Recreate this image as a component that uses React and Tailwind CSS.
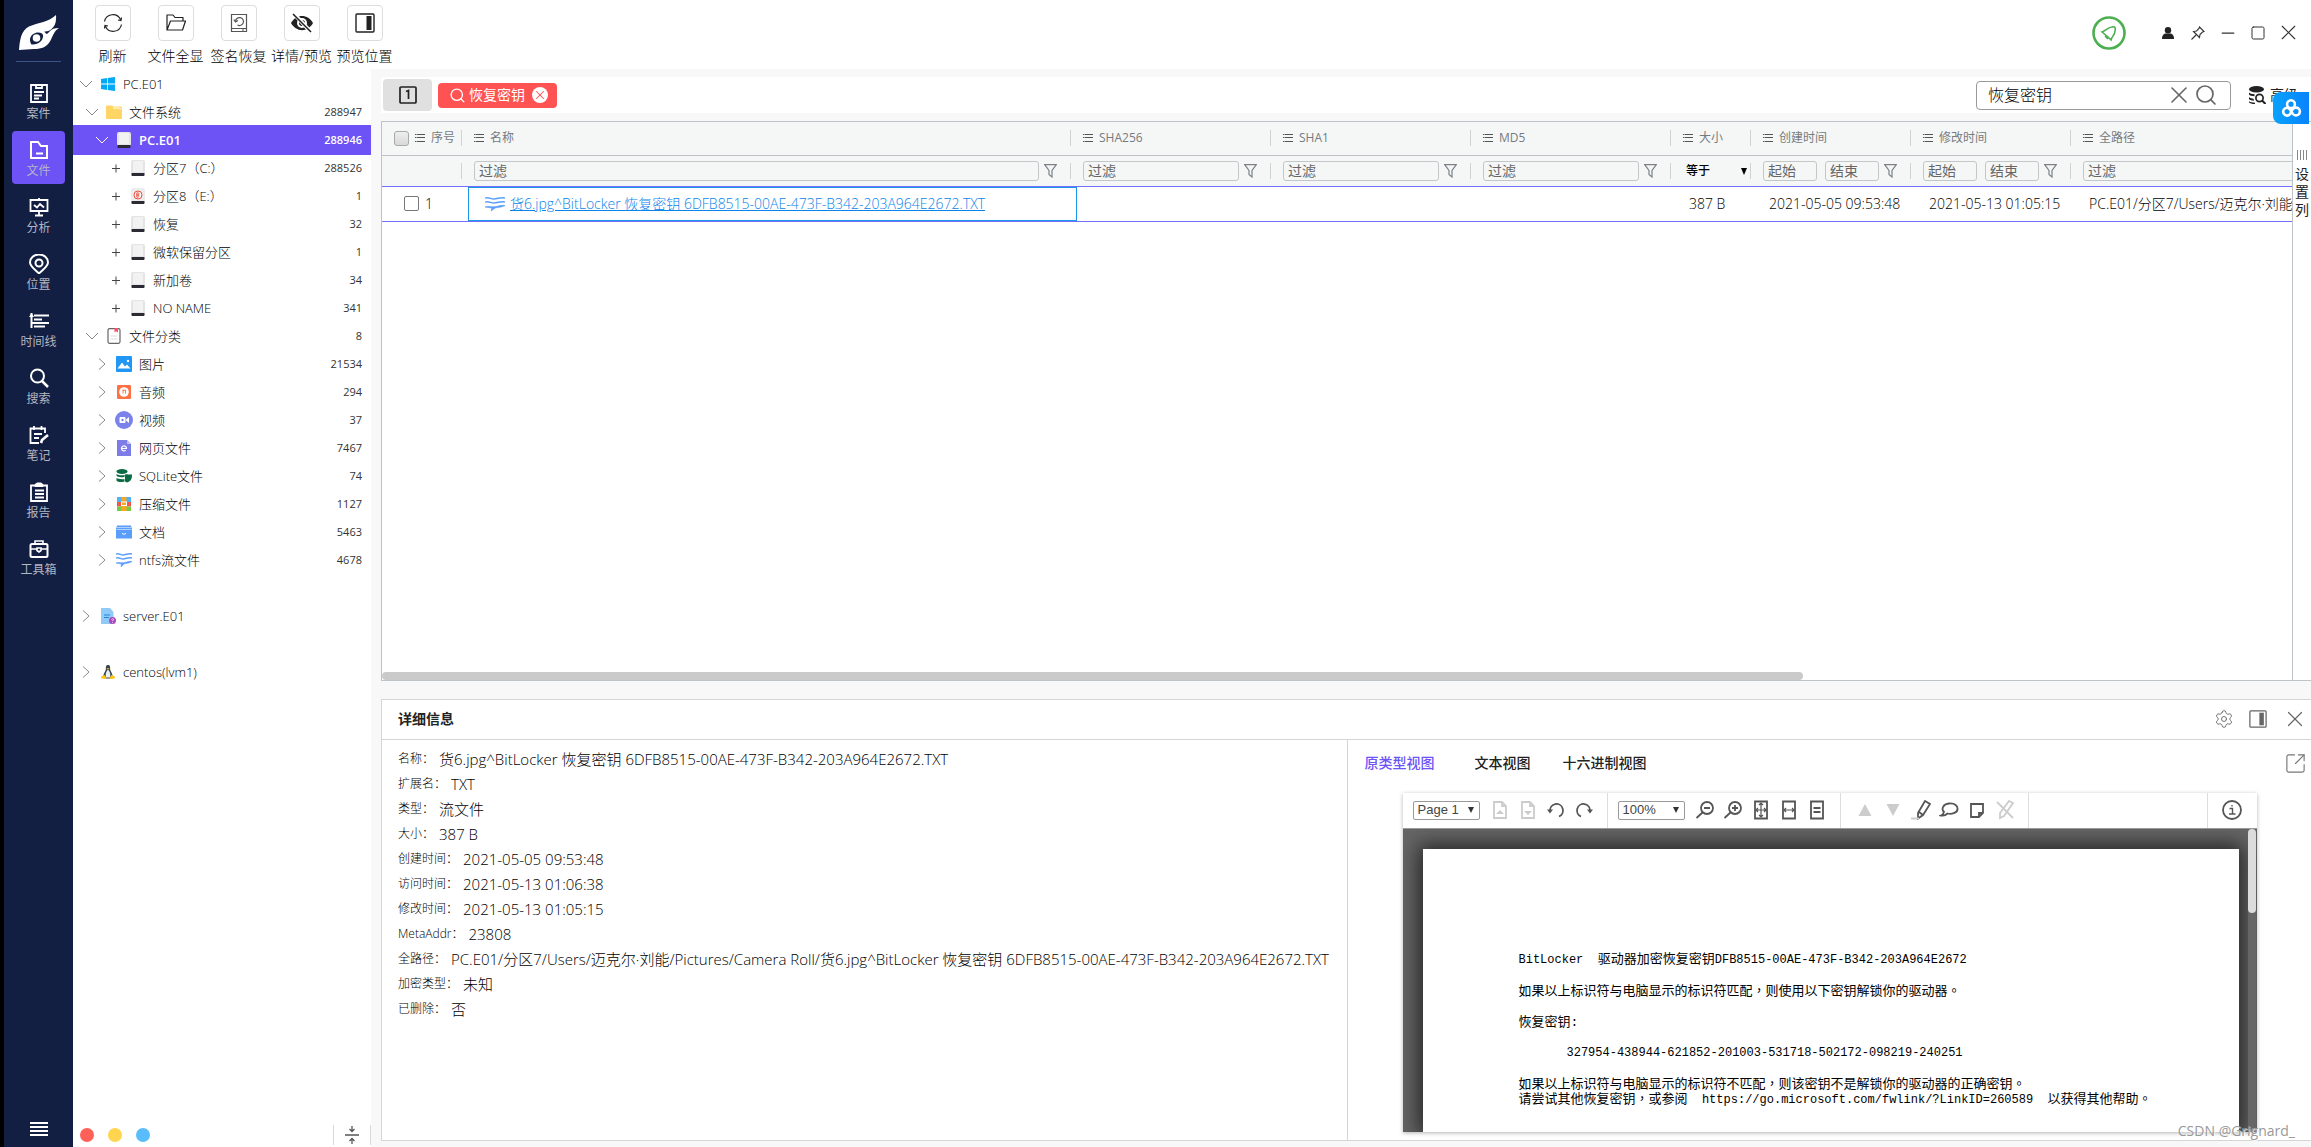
import { useState } from "react";
import { Search, X, Minus, Square, Settings, SquareArrowOutUpRight } from "lucide-react";

const NAV_ITEMS = [
  { label: "案件", icon: CaseIcon },
  { label: "文件", icon: FolderIcon },
  { label: "分析", icon: BoardIcon },
  { label: "位置", icon: PinIcon },
  { label: "时间线", icon: TimelineIcon },
  { label: "搜索", icon: NavSearchIcon },
  { label: "笔记", icon: NoteIcon },
  { label: "报告", icon: ReportIcon },
  { label: "工具箱", icon: ToolboxIcon },
];

const TOOLBAR = [
  { label: "刷新", icon: RefreshIcon },
  { label: "文件全显", icon: OpenFolderIcon },
  { label: "签名恢复", icon: RestoreIcon },
  { label: "详情/预览", icon: EyeOffIcon },
  { label: "预览位置", icon: PanelIcon },
];

const TREE = [
  { id: "pc", level: 0, open: true, icon: WindowsIcon, name: "PC.E01" },
  { id: "fs", level: 1, open: true, icon: YellowFolderIcon, name: "文件系统", count: 288947 },
  { id: "disk", level: 2, open: true, icon: DiskIcon, name: "PC.E01", count: 288946 },
  { id: "p7", level: 3, icon: DiskIcon, name: "分区7（C:）", count: 288526 },
  { id: "p8", level: 3, icon: LockedDiskIcon, name: "分区8（E:）", count: 1 },
  { id: "rec", level: 3, icon: DiskIcon, name: "恢复", count: 32 },
  { id: "msr", level: 3, icon: DiskIcon, name: "微软保留分区", count: 1 },
  { id: "vol", level: 3, icon: DiskIcon, name: "新加卷", count: 34 },
  { id: "noname", level: 3, icon: DiskIcon, name: "NO NAME", count: 341 },
  { id: "cat", level: 1, open: true, icon: BookIcon, name: "文件分类", count: 8 },
  { id: "img", level: 2, icon: ImageIcon, name: "图片", count: 21534 },
  { id: "audio", level: 2, icon: AudioIcon, name: "音频", count: 294 },
  { id: "video", level: 2, icon: VideoIcon, name: "视频", count: 37 },
  { id: "web", level: 2, icon: WebIcon, name: "网页文件", count: 7467 },
  { id: "sqlite", level: 2, icon: SqliteIcon, name: "SQLite文件", count: 74 },
  { id: "zip", level: 2, icon: ZipIcon, name: "压缩文件", count: 1127 },
  { id: "doc", level: 2, icon: DocsIcon, name: "文档", count: 5463 },
  { id: "ntfs", level: 2, icon: StreamIcon, name: "ntfs流文件", count: 4678 },
];

const OTHER_IMAGES = [
  { id: "server", level: 0, icon: UnknownFileIcon, name: "server.E01" },
  { id: "centos", level: 0, icon: LinuxIcon, name: "centos(lvm1)" },
];

const LEVEL_PADDING = {
  0: "pl-[7px]",
  1: "pl-[13px]",
  2: "pl-[23px]",
  3: "pl-[36px]",
};

const FILE_NAME =
  "货6.jpg^BitLocker 恢复密钥 6DFB8515-00AE-473F-B342-203A964E2672.TXT";

const DETAILS = [
  ["名称", FILE_NAME],
  ["扩展名", "TXT"],
  ["类型", "流文件"],
  ["大小", "387 B"],
  ["创建时间", "2021-05-05 09:53:48"],
  ["访问时间", "2021-05-13 01:06:38"],
  ["修改时间", "2021-05-13 01:05:15"],
  ["MetaAddr", "23808"],
  ["全路径", `PC.E01/分区7/Users/迈克尔·刘能/Pictures/Camera Roll/${FILE_NAME}`],
  ["加密类型", "未知"],
  ["已删除", "否"],
];

const COLUMNS = [
  { name: "名称", width: "w-[609px]", filter: "text" },
  { name: "SHA256", width: "w-[200px]", filter: "text" },
  { name: "SHA1", width: "w-[200px]", filter: "text" },
  { name: "MD5", width: "w-[200px]", filter: "text" },
  { name: "大小", width: "w-[80px]", filter: "size" },
  { name: "创建时间", width: "w-[160px]", filter: "range" },
  { name: "修改时间", width: "w-[160px]", filter: "range" },
  { name: "全路径", width: "", filter: "path" },
];

const PREVIEW_TABS = ["原类型视图", "文本视图", "十六进制视图"];

/* ---------- nav icons ---------- */

function NavSvg({ children }) {
  return (
    <svg className="size-5" viewBox="0 0 20 20" fill="none" stroke="currentColor" strokeWidth="2">
      {children}
    </svg>
  );
}

function CaseIcon() {
  return (
    <NavSvg>
      <path d="M2 2h16v17H2zM7 1v4h6V1M5 9h10M5 12.500h8M5 15.500h5" strokeWidth="1.800" />
    </NavSvg>
  );
}

function FolderIcon() {
  return (
    <NavSvg>
      <path d="M2 18V2h7l3 4h6v12zM7 13.500h7" />
    </NavSvg>
  );
}

function BoardIcon() {
  return (
    <NavSvg>
      <path d="M1.500 3h17v11h-17zM10 1v2M10 14v4M6 18.500h8M5 8l3 2.500 3-3.500 4 3.500" strokeWidth="1.800" />
    </NavSvg>
  );
}

function PinIcon() {
  return (
    <NavSvg>
      <path d="M10 19.500C5 15 1 12 1 8.500a9 8 0 0 1 18 0C19 12 15 15 10 19.500z" />
      <circle cx="10" cy="9" r="3.500" />
    </NavSvg>
  );
}

function TimelineIcon() {
  return (
    <NavSvg>
      <path d="M2.500 2v15M5 4.500h15M5 8.500h8M2 12h18M5 15.500h11" />
      <path d="M0 6l2.500-4L5 6z" fill="currentColor" stroke="none" />
    </NavSvg>
  );
}

function NavSearchIcon() {
  return (
    <NavSvg>
      <circle cx="8.500" cy="8" r="6.500" />
      <path d="M13 13l6 6" strokeWidth="2.500" />
    </NavSvg>
  );
}

function NoteIcon() {
  return (
    <NavSvg>
      <path d="M16 8V3.500H1.500V18H10M5 1v4M12.500 1v4M5 9h8M5 13h5" strokeWidth="1.800" />
      <path d="M12 18l1-3 6-5" strokeWidth="2.600" />
    </NavSvg>
  );
}

function ReportIcon() {
  return (
    <NavSvg>
      <path d="M2 3.500h16V19H2zM6 8.500h9M6 12h9M6 15.500h9" strokeWidth="1.800" />
      <path d="M6 2.500l2-1.500h4l2 1.500v2H6z" fill="currentColor" strokeWidth="1" />
    </NavSvg>
  );
}

function ToolboxIcon() {
  return (
    <NavSvg>
      <rect x="1.500" y="5" width="17" height="13" rx="1.500" />
      <path d="M6 5V2h8v3M2 10h5.500M12.500 10H18M8 9h4v2.500l-2 1.500-2-1.500z" strokeWidth="1.600" />
    </NavSvg>
  );
}

function Logo() {
  return (
    <svg className="h-9 w-10" viewBox="0 0 40 36">
      <path
        d="M0 35C1 24 2 16 10 11.500 19 7.500 30 7 37 0c.5 6-.5 11-5 14.500-3 2.500-8 2-13 3-6 1.500-8 7-6.500 12.500.5 1.500 0 2-1 1.500C8 26 10 18 17 15.500c4-1.200 8 0 9.500 2.500 1 1.500 2 1 4-1.500 2-2.500 5-3.500 9.500-3.500-5 3-6 8-8.500 12.500C28 32 23 34 15 34z"
        fill="#fff"
      />
      <path d="M11 24c1-6 8-8 12-5.500 2 2 1 6-2 8.500-2 1.500-5 3-8.500 2.500-1-1-1.500-3-1.500-5.500z" fill="#121f42" />
      <circle cx="17.500" cy="23" r="3.800" fill="#fff" />
    </svg>
  );
}

/* ---------- toolbar icons ---------- */

function RefreshIcon() {
  return (
    <svg className="size-5" viewBox="0 0 20 20" fill="none" stroke="#222" strokeWidth="1.200">
      <path d="M1.500 8.500A8.500 8.500 0 0 1 17.500 6.500M18.500 11.500A8.500 8.500 0 0 1 2.500 13.500M18.500 4.500l-.5 3-3-.5M1.500 15.500l.5-3 3 .5" />
    </svg>
  );
}

function OpenFolderIcon() {
  return (
    <svg className="size-5" viewBox="0 0 20 20" fill="none" stroke="#222" strokeWidth="1.200" strokeLinejoin="round">
      <path d="M1 17V2h6l2 2.500h8V8M1 17L4.500 8H19.500L16.500 17z" />
    </svg>
  );
}

function RestoreIcon() {
  return (
    <svg className="size-5" viewBox="0 0 20 20" fill="none" stroke="#555" strokeWidth="1.200">
      <path d="M2.500 1.500h15v17h-15zM2.500 15.500h15M13 17h2" />
      <path d="M6.500 8.500a4 4 0 1 1 2 3.500M4.800 6.500l1.700 2.500 2.500-1.500" />
    </svg>
  );
}

function EyeOffIcon() {
  return (
    <svg className="h-5 w-[22px]" viewBox="0 0 22 20" fill="none">
      <path d="M0 10c5-9.500 17-9.500 22 0-5 9.500-17 9.500-22 0z" fill="#222" />
      <circle cx="11" cy="10" r="5" fill="#fff" />
      <circle cx="11" cy="10" r="3" fill="#222" />
      <path d="M3 1l17 18" stroke="#fff" strokeWidth="4" />
      <path d="M2 1l18 18" stroke="#222" strokeWidth="1.600" />
    </svg>
  );
}

function PanelIcon({ className = "size-5" }) {
  return (
    <svg className={className} viewBox="0 0 20 20" fill="none" stroke="currentColor" strokeWidth="1.400">
      <rect x="1" y="1" width="18" height="18" rx="1" />
      <path d="M11.500 3h5v14h-5z" fill="currentColor" stroke="none" />
    </svg>
  );
}

/* ---------- tree icons ---------- */

function WindowsIcon() {
  return (
    <svg className="size-[14px]" viewBox="0 0 14 14" fill="#03a9f4">
      <path d="M0 2l6-1v5.600H0zM6.700.9L14 0v6.600H6.700zM0 7.400h6V13l-6-1zM6.700 7.400H14V14l-7.300-1z" />
    </svg>
  );
}

function YellowFolderIcon() {
  return (
    <svg className="size-4" viewBox="0 0 16 16">
      <path d="M0 2.500C0 2 .5 1.500 1 1.500h5l1 1h8c.5 0 1 .5 1 1V14c0 .5-.5 1-1 1H1c-.5 0-1-.5-1-1z" fill="#ffd666" />
      <path d="M7 4h6l2 1" stroke="#fff" strokeWidth="1" fill="none" />
    </svg>
  );
}

function DiskIcon() {
  return (
    <svg className="h-4 w-[14px]" viewBox="0 0 14 16">
      <rect x="0" y="0" width="14" height="14" rx="2" fill="#e4e4e4" />
      <rect x="2" y="1" width="10" height="11" rx="1" fill="#f2f2f2" />
      <path d="M.5 13h13v2c0 .6-.4 1-1 1h-11c-.6 0-1-.4-1-1z" fill="#2b2b33" />
    </svg>
  );
}

function LockedDiskIcon() {
  return (
    <svg className="h-4 w-[14px]" viewBox="0 0 14 16">
      <rect x="0" y="0" width="14" height="14" rx="2" fill="#ececec" />
      <path d="M.5 13h13v2c0 .6-.4 1-1 1h-11c-.6 0-1-.4-1-1z" fill="#2b2b33" />
      <circle cx="7" cy="7" r="4" fill="#fff" stroke="#e74c3c" />
      <path d="M5.800 4.800v4.400h1.400a1.200 1.200 0 0 0 0-2.200H5.800h1.200a1.100 1.100 0 0 0 0-2.200z" fill="none" stroke="#e74c3c" strokeWidth=".9" />
    </svg>
  );
}

function BookIcon() {
  return (
    <svg className="size-4" viewBox="0 0 16 16">
      <rect x="2" y=".7" width="12" height="14.600" rx="1.500" fill="#fff" stroke="#666" strokeWidth="1.200" />
      <path d="M8.500 0h3.500v4.500l-1.800-1.300-1.700 1.300z" fill="#ff4d6a" />
      <path d="M4.500 8h7M4.500 11h7" stroke="#ddd" />
    </svg>
  );
}

function ImageIcon() {
  return (
    <svg className="size-4" viewBox="0 0 16 16">
      <rect width="16" height="16" rx="1" fill="#2196f3" />
      <path d="M1.500 12.500l4.500-6 3 4 2-2 3.500 4z" fill="#fff" />
      <circle cx="12" cy="5" r="1.200" fill="#fff" />
    </svg>
  );
}

function AudioIcon() {
  return (
    <svg className="size-4" viewBox="0 0 16 16">
      <rect x="1" y="1" width="14" height="14" rx="1" fill="#ff7043" />
      <circle cx="8" cy="8" r="4.800" fill="#fff" />
      <path d="M7 5.500v4M7 6.500l2.500-.5v3.500" stroke="#ff7043" fill="none" />
    </svg>
  );
}

function VideoIcon() {
  return (
    <svg className="size-[18px]" viewBox="0 0 18 18">
      <circle cx="9" cy="9" r="9" fill="#7b83eb" />
      <rect x="4.500" y="6" width="6" height="6" rx="1" fill="#fff" />
      <path d="M10.500 9l3.500-3v6z" fill="#fff" />
      <circle cx="7.500" cy="9" r="1.200" fill="#7b83eb" />
    </svg>
  );
}

function WebIcon() {
  return (
    <svg className="size-4" viewBox="0 0 16 16">
      <path d="M1 0h10l4 4v12H1z" fill="#7e7ce6" />
      <path d="M11 0l4 4h-4z" fill="#c3c2f7" />
      <path d="M5.500 8.500h5a2.500 2.500 0 1 0-.8 1.800" stroke="#fff" strokeWidth="1.200" fill="none" />
    </svg>
  );
}

function SqliteIcon() {
  return (
    <svg className="size-4" viewBox="0 0 16 16" fill="#0b6b45">
      <ellipse cx="6" cy="3.500" rx="5.500" ry="2.500" />
      <path d="M.5 6c2 1.700 9 1.700 11 0v1.500H8.500v1.500C4 9.500 1 9 .5 7.500zM.5 10c1.500 1 5 1.500 8 1v2.500C5 14.500 1 14 .5 12.500z" />
      <path d="M9 6.500h7c0 5-1.500 7-5 8l-2-1z" />
    </svg>
  );
}

function ZipIcon() {
  return (
    <svg className="size-4" viewBox="0 0 16 16">
      <path d="M1 1h14v5H1z" fill="#4fb3f6" />
      <path d="M1 6h14v4.500H1z" fill="#f2564d" />
      <path d="M1 10.500h14V15H1z" fill="#7ac943" />
      <path d="M5.500 1h5v14h-5z" fill="#f6a623" />
      <rect x="5.500" y="6" width="5" height="3.500" fill="#f6a623" stroke="#fff" />
    </svg>
  );
}

function DocsIcon() {
  return (
    <svg className="size-4" viewBox="0 0 16 16">
      <path d="M1 1.500h14l1 3v10H0v-10z" fill="#5b9dfb" />
      <path d="M.5 3.500h15M.5 5.500h15" stroke="#d5e6ff" strokeWidth=".7" />
      <path d="M6 9.500q2 1.500 4 0" stroke="#fff" fill="none" />
    </svg>
  );
}

function StreamIcon({ className = "size-4" }) {
  return (
    <svg className={className} viewBox="0 0 16 16" preserveAspectRatio="none" fill="none" stroke="#5b9dfb" strokeWidth="1.500">
      <path d="M0 2.200c3-1.500 5 1.500 8 .7s5-1.700 8-1M0 6.200c3-1.500 5 1.500 8 .7s5-1.700 8-1" />
      <path d="M0 11c3-1.500 5 .3 8-.3s5-1.700 8-1.200c-3 2-6 1.800-8 2.500L5 15l.5-3z" fill="#5b9dfb" strokeWidth=".6" />
    </svg>
  );
}

function UnknownFileIcon() {
  return (
    <svg className="size-4" viewBox="0 0 16 16">
      <path d="M1 0h9l3.500 4v12H1z" fill="#90caf9" />
      <path d="M4 7h6M4 9.500h5" stroke="#2086e0" strokeWidth="1.200" />
      <circle cx="12.500" cy="12.500" r="3.500" fill="#ab47bc" />
      <path d="M11.500 11.500c.3-1 2-.9 2 0 0 .7-1 .8-1 1.600M12.500 14v.8" stroke="#fff" strokeWidth=".8" fill="none" />
    </svg>
  );
}

function LinuxIcon() {
  return (
    <svg className="size-[14px]" viewBox="0 0 14 14">
      <path d="M7 0C4.800 0 4.800 2 4.900 4 4.900 6 2 8.500 2.500 12l2.500 1.500h4l2.500-1.500C12 8.500 9.100 6 9.100 4 9.200 2 9.200 0 7 0z" fill="#37474f" />
      <path d="M7 4.500C5.500 6 4 9 5 12.500h4C10 9 8.500 6 7 4.500z" fill="#eceff1" />
      <path d="M5.500 3.200h3L7 4.800zM.3 11.500L3.500 10l2 3-1.500 1-4-.7zM13.700 11.500L10.500 10l-2 3 1.500 1 4-.7z" fill="#ffc107" />
    </svg>
  );
}

/* ---------- small shared glyphs ---------- */

function Chevron({ open }) {
  return open ? (
    <svg className="h-3 w-3 shrink-0" viewBox="0 0 12 12" fill="none" stroke="currentColor" strokeWidth="1">
      <path d="M0 3l6 6 6-6" />
    </svg>
  ) : (
    <svg className="h-3 w-3 shrink-0" viewBox="0 0 12 12" fill="none" stroke="currentColor" strokeWidth="1">
      <path d="M3 0.500l6 5.500-6 5.500" />
    </svg>
  );
}

function PlusMark() {
  return (
    <svg className="mr-px h-3 w-3 shrink-0" viewBox="0 0 12 12" stroke="#444" strokeWidth="1">
      <path d="M3 6.500h8M7 2.500v8" />
    </svg>
  );
}

function ListMark() {
  return (
    <svg className="h-[10px] w-[10px] shrink-0" viewBox="0 0 10 10" stroke="#555" strokeWidth="1">
      <path d="M0 1.500h1.500M2 1.500h8M0 4.500h1.500M2 4.500h8M0 8.500h1.500M2 8.500h8" />
    </svg>
  );
}

function Funnel() {
  return (
    <svg className="h-[14px] w-[13px]" viewBox="0 0 13 14" fill="none" stroke="#7b8285" strokeWidth="1.200">
      <path d="M.7.700h11.600L8 6.500V13L5 10.500v-4z" />
    </svg>
  );
}

function Caret() {
  return (
    <svg
      className="pointer-events-none absolute right-[6px] top-1/2 h-[6px] w-[6px] -translate-y-1/2"
      viewBox="0 0 6 6"
      fill="#333"
    >
      <path d="M0 0h6L3 6z" />
    </svg>
  );
}

/* ---------- left side ---------- */

function NavRail({ active, onSelect }) {
  return (
    <nav className="flex w-[73px] shrink-0 flex-col items-center border-l-4 border-black bg-[#121f42]">
      <div className="mt-[15px]">
        <Logo />
      </div>
      <hr className="mt-[10px] w-[45px] border-[#3d5488]" />
      <ul className="mt-3 flex flex-col gap-1">
        {NAV_ITEMS.map(({ label, icon: Icon }) => (
          <li key={label}>
            <button
              type="button"
              onClick={() => onSelect(label)}
              className={
                active === label
                  ? "flex size-[53px] flex-col items-center justify-center gap-[3px] rounded-[4px] bg-[#6d52f6] pt-[3px] text-white"
                  : "flex size-[53px] flex-col items-center justify-center gap-[3px] rounded-[4px] pt-[3px] text-white"
              }
            >
              <Icon />
              <span className="text-xs leading-4 text-[#b3b7c3]">{label}</span>
            </button>
          </li>
        ))}
      </ul>
      <button type="button" aria-label="菜单" className="mb-[11px] mt-auto text-white">
        <svg className="h-[14px] w-[18px]" viewBox="0 0 18 14" stroke="currentColor" strokeWidth="2">
          <path d="M0 1h18M0 5h18M0 9h18M0 13h18" />
        </svg>
      </button>
    </nav>
  );
}

function TreeRow({ node, selected, onSelect }) {
  const Icon = node.icon;
  return (
    <li>
      <button
        type="button"
        onClick={() => onSelect(node.id)}
        className={
          selected
            ? "-my-px flex h-[30px] w-full items-center bg-[#6d52f6] pr-[9px] font-semibold text-white"
            : "flex h-7 w-full items-center pr-[9px] font-light text-black"
        }
      >
        <span className={`flex items-center ${LEVEL_PADDING[node.level]}`}>
          {node.level === 3 ? (
            <PlusMark />
          ) : (
            <span className={selected ? "text-white" : "text-[#888]"}>
              <Chevron open={node.open} />
            </span>
          )}
          <span className="ml-[6px] mr-[5px] flex w-[20px] justify-center">
            <Icon />
          </span>
          <span className="whitespace-nowrap text-[13px] leading-5">{node.name}</span>
        </span>
        {node.count !== undefined && (
          <span className={selected ? "ml-auto text-[11px]" : "ml-auto text-[11px] font-normal text-[#333]"}>
            {node.count}
          </span>
        )}
      </button>
    </li>
  );
}

function Sidebar() {
  const [selected, setSelected] = useState("disk");

  return (
    <aside className="flex w-[298px] shrink-0 flex-col bg-white">
      <ul className="pt-px">
        {TREE.map((node) => (
          <TreeRow key={node.id} node={node} selected={selected === node.id} onSelect={setSelected} />
        ))}
      </ul>
      <ul className="mt-7 flex flex-col gap-7">
        {OTHER_IMAGES.map((node) => (
          <TreeRow key={node.id} node={node} selected={selected === node.id} onSelect={setSelected} />
        ))}
      </ul>
      <div className="mb-[2px] mt-auto flex h-5 items-center gap-[14px] pl-[7px]">
        <span className="size-[14px] rounded-full bg-[#ff6159]" />
        <span className="size-[14px] rounded-full bg-[#ffd54f]" />
        <span className="size-[14px] rounded-full bg-[#59bdfb]" />
        <button
          type="button"
          aria-label="全部折叠"
          className="ml-auto flex h-full w-[38px] items-center justify-center border-x border-[#d9d9d9]"
        >
          <svg className="h-[18px] w-[14px]" viewBox="0 0 14 18" fill="none" stroke="#555" strokeWidth="1.300">
            <path d="M0 9h14M7 0v5M4.500 3L7 5.500 9.500 3M7 18v-5M4.500 15L7 12.500 9.500 15" />
          </svg>
        </button>
      </div>
    </aside>
  );
}

/* ---------- header ---------- */

function TopBar() {
  return (
    <header className="flex h-[69px] shrink-0 justify-between bg-white pl-2 pr-2">
      <div className="flex pt-[5px]">
        {TOOLBAR.map(({ label, icon: Icon }) => (
          <button key={label} type="button" className="flex w-[63px] flex-col items-center text-[#222]">
            <span className="flex size-9 items-center justify-center rounded-[4px] border border-[#ddd]">
              <Icon />
            </span>
            <span className="mt-1 whitespace-nowrap text-sm leading-[22px] font-light text-black">{label}</span>
          </button>
        ))}
      </div>
      <div className="flex h-[65px] items-center text-[#333]">
        <button type="button" aria-label="通知" className="mr-[27px]">
          <svg className="size-[34px]" viewBox="0 0 34 34" fill="none" stroke="#4caf50">
            <circle cx="17" cy="17" r="15.500" strokeWidth="2.600" />
            <path d="M10 16c4-1 6-5 10-5 3-1 4 1 3 4 0 4-3 5-4 9l-3-3-6-5zM13 20l3 3" strokeWidth="1.600" />
          </svg>
        </button>
        <button type="button" aria-label="用户" className="flex w-[30px] justify-center">
          <svg className="size-3" viewBox="0 0 12 12" fill="#222">
            <circle cx="6" cy="3.200" r="3.200" />
            <path d="M0 12c0-4 2-5.500 4-5.500h4c2 0 4 1.500 4 5.500z" />
          </svg>
        </button>
        <button type="button" aria-label="置顶" className="flex w-[30px] justify-center">
          <svg className="size-[14px]" viewBox="0 0 14 14" fill="none" stroke="#333" strokeWidth="1.100">
            <path d="M8.500 1l4.500 4.500-1.500.5-2.500 2.500-.5 3-6-6 3-.5L8 2.500zM5 9L.5 13.500" />
          </svg>
        </button>
        <button type="button" aria-label="最小化" className="flex w-[30px] justify-center">
          <Minus size={20} strokeWidth={1.5} />
        </button>
        <button type="button" aria-label="最大化" className="flex w-[30px] justify-center">
          <Square size={16} strokeWidth={1.5} />
        </button>
        <button type="button" aria-label="关闭" className="flex w-[30px] justify-center">
          <X size={25} strokeWidth={1.1} />
        </button>
      </div>
    </header>
  );
}

function SearchStrip() {
  const [keyword, setKeyword] = useState("恢复密钥");

  return (
    <div className="relative flex h-9 shrink-0 items-center bg-white pl-[2px]">
      <button
        type="button"
        aria-label="标签1"
        className="flex h-8 w-[49px] items-center justify-center rounded-[4px] bg-[#e0e0e0]"
      >
        <svg className="h-[18px] w-[18px]" viewBox="0 0 18 18" fill="none" stroke="#222" strokeWidth="1.700">
          <rect x="1" y="1" width="16" height="16" rx="1" />
          <path d="M7 5.500L9.500 4.500V13" />
        </svg>
      </button>
      <div className="ml-[6px] flex h-[25px] items-center rounded-[4px] bg-[#ff5353] pl-[11px] pr-[9px] text-white">
        <Search size={17} strokeWidth={1.8} />
        <span className="ml-[3px] text-sm leading-5">恢复密钥</span>
        <button type="button" aria-label="移除" className="ml-[7px] flex size-4 items-center justify-center rounded-full bg-white text-[#ff5353]">
          <X size={14} strokeWidth={1.8} />
        </button>
      </div>
      <div className="ml-auto flex h-[29px] w-[255px] items-center rounded-[4px] border border-[#999] pl-[11px] pr-3">
        <input
          aria-label="搜索"
          value={keyword}
          onChange={(event) => setKeyword(event.target.value)}
          className="min-w-0 flex-1 text-base leading-6 font-light text-black outline-none"
        />
        <button type="button" aria-label="清空" onClick={() => setKeyword("")} className="text-[#666]">
          <X size={28} strokeWidth={1.4} />
        </button>
        <button type="button" aria-label="搜索" className="ml-px text-[#666]">
          <Search size={24} strokeWidth={1.7} />
        </button>
      </div>
      <button type="button" className="ml-[17px] mr-[13px] flex items-center gap-1 text-[#222]">
        <svg className="size-[18px]" viewBox="0 0 18 18" fill="#222">
          <ellipse cx="8.500" cy="3.200" rx="7.500" ry="3.200" />
          <path d="M1 6.500c1 1 3 1.600 5.500 1.800v2C4 10.200 1.500 9.500 1 8.500zM1 11c1 1 3 1.500 4.500 1.700l.6 2C4 14.500 1.500 14 1 13zM1 15.200c1.500 1 3.500 1.300 6 1.500v1.300c-3 0-5.500-.7-6-1.500z" />
          <circle cx="11.500" cy="12" r="3.600" fill="#fff" stroke="#222" strokeWidth="1.700" />
          <path d="M14 14.500l3.500 3.500" stroke="#222" strokeWidth="2" />
        </svg>
        <span className="text-sm leading-5">高级</span>
      </button>
      {/* netdisk floating badge */}
      <div className="absolute right-[2px] top-[15px] flex h-8 w-9 items-center justify-center rounded-l-lg bg-gradient-to-r from-[#0aa2fd] to-[#0b83fb]">
        <svg className="h-[18px] w-[22px]" viewBox="0 0 22 18" fill="none" stroke="#fff" strokeWidth="2.600">
          <circle cx="11" cy="5.200" r="3.900" />
          <path d="M11 12.500a3.900 3.900 0 1 1-3-3.600c2 .5 3.500 4.500 5 6M11 12.500l2-2.500M13 15a3.900 3.900 0 1 0 0-5" />
        </svg>
      </div>
    </div>
  );
}

/* ---------- file grid ---------- */

const FILTER_INPUT =
  "h-5 min-w-0 flex-1 rounded-[3px] border border-[#c3c7c9] px-1 text-sm text-[#444] outline-none placeholder:text-[#666]";

function Separator() {
  return <span className="mr-[6px] h-4 w-px shrink-0 bg-[#cfd3d6]" />;
}

function FilterCell({ column }) {
  if (column.filter === "path") {
    return (
      <div className="flex overflow-hidden pl-[6px]">
        <input
          aria-label={`${column.name}过滤`}
          placeholder="过滤"
          className="-mr-1 h-5 min-w-0 flex-1 rounded-l-[3px] border border-[#c3c7c9] px-1 text-sm outline-none placeholder:text-[#666]"
        />
      </div>
    );
  }
  if (column.filter === "size") {
    return (
      <div className="flex items-center pl-[6px]">
        <div className="relative flex-1 text-black">
          <select aria-label="大小过滤" className="w-full appearance-none bg-transparent pl-[3px] text-xs font-medium outline-none">
            <option>等于</option>
            <option>大于</option>
            <option>小于</option>
          </select>
          <svg className="pointer-events-none absolute right-[3px] top-[5px] h-[7px] w-[6px]" viewBox="0 0 6 7">
            <path d="M0 0h6L3 7z" />
          </svg>
        </div>
        <Separator />
      </div>
    );
  }
  return (
    <div className="flex items-center pl-[6px]">
      {column.filter === "range" ? (
        <div className="flex min-w-0 flex-1 gap-2">
          <input aria-label={`${column.name}起始`} placeholder="起始" className={FILTER_INPUT} />
          <input aria-label={`${column.name}结束`} placeholder="结束" className={FILTER_INPUT} />
        </div>
      ) : (
        <input aria-label={`${column.name}过滤`} placeholder="过滤" className={FILTER_INPUT} />
      )}
      <button type="button" aria-label={`${column.name}筛选`} className="ml-[5px] mr-[13px]">
        <Funnel />
      </button>
      <Separator />
    </div>
  );
}

function FileGrid() {
  const [checked, setChecked] = useState(false);

  return (
    <section className="flex min-h-0 flex-[560] border-y border-l border-[#bdc3c7] bg-white">
      <div className="flex min-w-0 flex-1 flex-col overflow-hidden">
        <table className="w-full table-fixed border-collapse text-left">
          <thead className="bg-[#f5f7f7] text-xs text-[#757b7e]">
            <tr className="h-[33px] border-b border-[#bdc3c7]">
              <th className="w-[86px] p-0 font-normal">
                <div className="flex items-center pl-3">
                  <input
                    type="checkbox"
                    aria-label="全选"
                    className="mr-[6px] size-[15px] shrink-0 appearance-none rounded-[3px] border border-[#aaa] bg-gradient-to-b from-[#eee] to-[#d8d8d8]"
                  />
                  <ListMark />
                  <span className="ml-[6px] whitespace-nowrap">序号</span>
                  <span className="ml-auto flex">
                    <Separator />
                  </span>
                </div>
              </th>
              {COLUMNS.map((column, index) => (
                <th key={column.name} className={`${column.width} p-0 font-normal`}>
                  <div className="flex items-center pl-[6px]">
                    <ListMark />
                    <span className="ml-[6px] mr-auto whitespace-nowrap">{column.name}</span>
                    {index < COLUMNS.length - 1 && <Separator />}
                  </div>
                </th>
              ))}
            </tr>
            <tr className="h-[31px]">
              <td className="p-0">
                <div className="flex justify-end">
                  <Separator />
                </div>
              </td>
              {COLUMNS.map((column) => (
                <td key={column.name} className="p-0">
                  <FilterCell column={column} />
                </td>
              ))}
            </tr>
          </thead>
          <tbody className="text-sm font-light text-black">
            <tr className="h-[35px] border-y border-[#7570fb]">
              <td className="p-0">
                <label className="flex items-center gap-[6px] pl-[22px]">
                  <input
                    type="checkbox"
                    checked={checked}
                    onChange={(event) => setChecked(event.target.checked)}
                    className="size-[15px] appearance-none rounded-[2px] border border-[#777] bg-white checked:bg-[#6d52f6]"
                  />
                  1
                </label>
              </td>
              <td className="p-0">
                <div className="flex h-[34px] items-center border border-[#1a96e8] pl-4">
                  <StreamIcon className="h-4 w-5" />
                  <a href="#file" className="ml-[5px] whitespace-nowrap text-[#0a84ea] underline">
                    {FILE_NAME}
                  </a>
                </div>
              </td>
              <td />
              <td />
              <td />
              <td className="whitespace-nowrap py-0 pl-3 pr-0">387 B</td>
              <td className="whitespace-nowrap py-0 pl-3 pr-0">2021-05-05 09:53:48</td>
              <td className="whitespace-nowrap py-0 pl-3 pr-0">2021-05-13 01:05:15</td>
              <td className="overflow-hidden whitespace-nowrap py-0 pl-3 pr-0">
                PC.E01/分区7/Users/迈克尔·刘能/
              </td>
            </tr>
          </tbody>
        </table>
        <div className="mt-auto h-2 w-[calc(100%-489px)] rounded-full bg-[#cacaca]" />
      </div>
      <button
        type="button"
        className="flex w-[19px] shrink-0 flex-col items-center border-l border-[#bdc3c7] pt-[28px] text-sm leading-[18px] text-[#222]"
      >
        <svg className="mb-[5px] h-[10px] w-[10px]" viewBox="0 0 10 10" stroke="#888" strokeWidth="1">
          <path d="M.5 0v10M3.500 0v10M6.500 0v10M9.500 0v10" />
        </svg>
        <span className="w-[14px]">设置列</span>
      </button>
    </section>
  );
}

/* ---------- preview ---------- */

function ViewerIcon({ label, disabled, children }) {
  return (
    <button
      type="button"
      aria-label={label}
      className={
        disabled
          ? "flex h-full w-7 items-center justify-center text-[#ccc]"
          : "flex h-full w-7 items-center justify-center text-[#555]"
      }
    >
      <svg className="size-5" viewBox="0 0 20 20" fill="none" stroke="currentColor" strokeWidth="1.800">
        {children}
      </svg>
    </button>
  );
}

function ViewerSelect({ label, value }) {
  return (
    <div className="relative flex">
      <select
        aria-label={label}
        className="h-[19px] w-[67px] appearance-none rounded-[2px] border border-[#999] bg-white pl-1 font-['Liberation_Sans',sans-serif] text-[13px] leading-4 text-[#444] outline-none"
      >
        <option>{value}</option>
      </select>
      <Caret />
    </div>
  );
}

function ViewerToolbar() {
  return (
    <div className="flex h-9 shrink-0 items-center border-b border-[#999] bg-white">
      <div className="flex h-full items-center border-r border-[#ddd] pl-[10px] pr-[9px]">
        <ViewerSelect label="页码" value="Page 1" />
        <span className="ml-[6px] flex h-full">
          <ViewerIcon label="上一页" disabled>
            <path d="M4 2h8l4 4v12H4zM12 2v4h4" />
            <path d="M6 14l4-4 4 4z" fill="currentColor" stroke="none" />
          </ViewerIcon>
          <ViewerIcon label="下一页" disabled>
            <path d="M4 2h8l4 4v12H4zM12 2v4h4" />
            <path d="M6 11l4 4 4-4z" fill="currentColor" stroke="none" />
          </ViewerIcon>
          <ViewerIcon label="向左旋转">
            <path d="M4 11a6.500 6.500 0 1 1 9 5.500" />
            <path d="M1 9.500h6L4 13.500z" fill="currentColor" stroke="none" />
          </ViewerIcon>
          <ViewerIcon label="向右旋转">
            <path d="M16 11a6.500 6.500 0 1 0-9 5.500" />
            <path d="M13 9.500h6L16 13.500z" fill="currentColor" stroke="none" />
          </ViewerIcon>
        </span>
      </div>
      <div className="flex h-full items-center border-r border-[#ddd] pl-[10px] pr-[9px]">
        <ViewerSelect label="缩放" value="100%" />
        <span className="ml-[6px] flex h-full">
          <ViewerIcon label="缩小">
            <circle cx="12" cy="8" r="6" />
            <path d="M8 12l-6.500 6M9 8h6" />
          </ViewerIcon>
          <ViewerIcon label="放大">
            <circle cx="12" cy="8" r="6" />
            <path d="M8 12l-6.500 6M9 8h6M12 5v6" />
          </ViewerIcon>
          <ViewerIcon label="适合页面">
            <path d="M4 1.500h12v17H4z" />
            <path d="M10 3v14M5 10h10M8 5l2-2 2 2M8 15l2 2 2-2M7 8l-2 2 2 2M13 8l2 2-2 2" strokeWidth="1.200" />
          </ViewerIcon>
          <ViewerIcon label="适合宽度">
            <path d="M4 1.500h12v17H4z" />
            <path d="M5 10h10M7 8l-2 2 2 2M13 8l2 2-2 2" strokeWidth="1.200" />
          </ViewerIcon>
          <ViewerIcon label="连续页面">
            <path d="M4 1.500h12v17H4zM6.500 8h7M6.500 12h7" />
          </ViewerIcon>
        </span>
      </div>
      <div className="flex h-full items-center border-r border-[#ddd] pl-[10px] pr-[9px]">
        <ViewerIcon label="上一条" disabled>
          <path d="M3.500 16L10 4l6.500 12z" fill="currentColor" stroke="none" />
        </ViewerIcon>
        <ViewerIcon label="下一条" disabled>
          <path d="M3.500 4L10 16l6.500-12z" fill="currentColor" stroke="none" />
        </ViewerIcon>
        <ViewerIcon label="标注">
          <path d="M14 1l5 3-7 11-5 3.500V13zM8 12l4 3" />
          <path d="M0 18.500h8" stroke="#ccc" strokeWidth="2" />
        </ViewerIcon>
        <ViewerIcon label="批注">
          <path d="M5 12C2 9 4 4 10 3.500s9 2.500 8.500 6-6 5-10 4c-1.500 1.500-4 2.500-6.500 2 1.500-.5 2.500-2 3-3.500z" />
        </ViewerIcon>
        <ViewerIcon label="便签">
          <path d="M4 4h12v9l-4 4H4zM16 13h-4v4" />
        </ViewerIcon>
        <ViewerIcon label="删除批注" disabled>
          <path d="M2 2l16 16M14 1l4 2-9 13-4 2v-5z" />
        </ViewerIcon>
      </div>
      <div className="ml-auto flex h-full items-center border-l border-[#ddd] pl-[14px] pr-[15px]">
        <button type="button" aria-label="文档信息" className="text-[#555]">
          <svg className="size-5" viewBox="0 0 20 20" fill="none" stroke="currentColor" strokeWidth="1.800">
            <circle cx="10" cy="10" r="9" />
            <path d="M7.500 8.500h3V14M7 14h6.500M10 5v1.600" strokeWidth="1.400" />
          </svg>
        </button>
      </div>
    </div>
  );
}

function DocumentPage() {
  return (
    <div className="min-w-0 flex-1 bg-white pl-24 pt-[103px] text-[13px] leading-[15px] text-black shadow-[0_0_20px_4px_#222]">
      <div className="flex flex-col gap-4 whitespace-pre font-['Liberation_Mono','Noto_Sans_CJK_TC',monospace]">
        <p>
          <span className="text-[12px]">BitLocker{"  "}</span>
          驱动器加密恢复密钥
          <span className="text-[12px]">DFB8515-00AE-473F-B342-203A964E2672</span>
        </p>
        <p>如果以上标识符与电脑显示的标识符匹配，则使用以下密钥解锁你的驱动器。</p>
        <p>恢复密钥:</p>
        <p className="pl-12 text-[12px]">327954-438944-621852-201003-531718-502172-098219-240251</p>
        <div>
          <p>如果以上标识符与电脑显示的标识符不匹配，则该密钥不是解锁你的驱动器的正确密钥。</p>
          <p>
            请尝试其他恢复密钥，或参阅
            <span className="text-[12px]">{"  "}https://go.microsoft.com/fwlink/?LinkID=260589{"  "}</span>
            以获得其他帮助。
          </p>
        </div>
      </div>
    </div>
  );
}

function Preview() {
  const [tab, setTab] = useState(PREVIEW_TABS[0]);

  return (
    <div className="flex min-w-0 flex-1 flex-col">
      <div className="flex h-[53px] shrink-0 items-center pb-[6px] pl-[17px] pr-1 text-sm font-medium">
        <div className="flex gap-8">
          {PREVIEW_TABS.map((name, index) => (
            <button
              key={name}
              type="button"
              onClick={() => setTab(name)}
              className={`${tab === name ? "text-[#6d52f6]" : "text-[#222]"} ${index === 0 ? "mr-2" : ""}`}
            >
              {name}
            </button>
          ))}
        </div>
        <button type="button" aria-label="新窗口打开" className="ml-auto text-[#777]">
          <SquareArrowOutUpRight size={23} strokeWidth={1.2} />
        </button>
      </div>
      <div className="mb-2 ml-[55px] mr-[54px] flex min-h-0 flex-1 flex-col shadow-[0_1px_4px_rgba(0,0,0,0.3)]">
        <ViewerToolbar />
        <div className="flex min-h-0 flex-1 overflow-hidden bg-[#666] pl-5 pr-px">
          <div className="flex min-w-0 flex-1 pt-5">
            <DocumentPage />
          </div>
          <div className="relative ml-[9px] w-2 bg-[#666]">
            <div className="h-[84px] rounded-full bg-[#dcdcdc]" />
          </div>
        </div>
      </div>
    </div>
  );
}

function DetailPanel() {
  return (
    <section className="flex min-h-0 flex-[442] flex-col border-y border-l border-[#d5d5d5] bg-white">
      <div className="flex h-10 shrink-0 items-center border-b border-[#d5d5d5] pl-4 pr-[3px]">
        <h2 className="text-sm font-bold text-[#222]">详细信息</h2>
        <div className="ml-auto flex items-center gap-[15px] text-[#666]">
          <button type="button" aria-label="设置">
            <Settings size={20} strokeWidth={1.1} />
          </button>
          <button type="button" aria-label="预览位置">
            <PanelIcon className="size-[18px]" />
          </button>
          <button type="button" aria-label="关闭">
            <X size={26} strokeWidth={1.1} />
          </button>
        </div>
      </div>
      <div className="flex min-h-0 flex-1">
        <dl className="w-[calc(50%+1px)] shrink-0 border-r border-[#d5d5d5] pl-4 pt-[7px] font-light text-black">
          {DETAILS.map(([label, value]) => (
            <div key={label} className="flex h-[25px] items-center gap-[5px] whitespace-nowrap">
              <dt className="text-xs">{label}：</dt>
              <dd className="text-[15px] leading-5">{value}</dd>
            </div>
          ))}
        </dl>
        <Preview />
      </div>
    </section>
  );
}

export default function App() {
  const [activeNav, setActiveNav] = useState("文件");

  return (
    <div className="relative flex h-screen overflow-hidden bg-[#f8f8f8] font-['Open_Sans','Noto_Sans_CJK_SC',sans-serif]">
      <NavRail active={activeNav} onSelect={setActiveNav} />
      <div className="flex min-w-0 flex-1 flex-col">
        <TopBar />
        <div className="flex min-h-0 flex-1">
          <Sidebar />
          <main className="flex min-w-0 flex-1 flex-col pb-[6px] pl-[10px] pt-2">
            <SearchStrip />
            <div className="mt-2 flex min-h-0 flex-1 flex-col gap-[18px]">
              <FileGrid />
              <DetailPanel />
            </div>
          </main>
        </div>
      </div>
      <p className="absolute bottom-[6px] right-4 text-sm leading-5 text-[#999] [text-shadow:1px_1px_1px_#fff]">
        CSDN @Grignard_
      </p>
    </div>
  );
}
